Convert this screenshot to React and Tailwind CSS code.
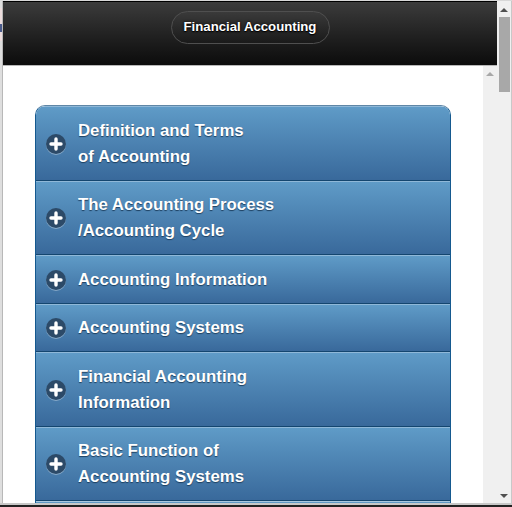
const items = [
  { lines: ["Definition and Terms", "of Accounting"], h: "h-[75px]" },
  { lines: ["The Accounting Process", "/Accounting Cycle"], h: "h-[74px]" },
  { lines: ["Accounting Information"], h: "h-[49px]" },
  { lines: ["Accounting Systems"], h: "h-[48px]" },
  { lines: ["Financial Accounting", "Information"], h: "h-[75px]" },
  { lines: ["Basic Function of", "Accounting Systems"], h: "h-[74px]" },
];

function Plus() {
  return (
    <span className="absolute left-[10px] top-1/2 -mt-[10px] flex h-[20px] w-[20px] items-center justify-center rounded-full bg-[#2c4a68] shadow-[0_1px_0_rgba(255,255,255,0.35)]">
      <svg width="14" height="14" viewBox="0 0 14 14">
        <path d="M7 2v10M2 7h10" stroke="#fff" strokeWidth="3.4" strokeLinecap="round" />
      </svg>
    </span>
  );
}

function Row({ it }) {
  return (
    <div
      className={`relative flex ${it.h} flex-col justify-center border-b border-[#14466f] border-t border-t-[#8fb8d8] bg-gradient-to-b from-[#5f9bc7] to-[#39699b] pl-[42px] text-[16.8px] leading-[26px] font-bold text-white [text-shadow:0_1px_1px_#1d3f5f]`}
    >
      <Plus />
      {it.lines.map((l) => (
        <div key={l}>{l}</div>
      ))}
    </div>
  );
}

export default function App() {
  return (
    <div className="flex h-[507px] w-[512px] flex-col overflow-hidden bg-[#d8d8d8] font-['Liberation_Sans',Arial,sans-serif]">
      <div className="flex min-h-0 flex-1 pt-px">
        <div className="flex w-[3px] shrink-0 flex-col border-r border-[#b8b8b8] bg-[#dedede]">
          <div className="mt-[7px] h-[33px] bg-[#ecdcdc] pt-[16px]">
            <div className="h-[8px] bg-[#4a5a8a]" />
          </div>
        </div>
        <div className="flex min-w-0 flex-1 flex-col bg-white">
          <header className="flex h-[65px] shrink-0 justify-center border-t border-b border-t-black border-b-[#b8b8b8] bg-gradient-to-b from-[#3c3c3c] to-[#0c0c0c] pt-[9px]">
            <div className="flex h-[33px] w-[159px] items-center justify-center rounded-full border border-[#4f4f4f] bg-gradient-to-b from-[#3a3a3a] to-[#1a1a1a] pb-px text-[13.2px] font-bold text-white [text-shadow:0_0_3px_#000,0_1px_1px_#000]">
              Financial Accounting
            </div>
          </header>
          <div className="flex min-h-0 flex-1">
            <div className="min-w-0 flex-1 overflow-hidden pt-[39px] pl-[32px]">
              <div className="w-[416px] overflow-hidden rounded-t-[10px] border-x border-t border-[#15598f] border-t-[#5f86a6]">
                {items.map((it) => (
                  <Row key={it.lines[0]} it={it} />
                ))}
                <div className="h-[10px] border-t border-[#a9c8df] bg-[#5e98c4]" />
              </div>
            </div>
            <div className="flex w-[14px] shrink-0 flex-col items-center bg-[#f0f0f0] pt-[6px]">
              <span className="h-0 w-0 border-x-[4px] border-b-[4px] border-x-transparent border-b-[#a8a8a8]" />
            </div>
          </div>
        </div>
        <aside className="relative flex w-[15px] shrink-0 flex-col items-center border-r border-[#c8c8c8] bg-[#f0f0f0]">
          <span className="mt-[7px] h-0 w-0 border-x-[4px] border-b-[4px] border-x-transparent border-b-[#505050]" />
          <div className="mt-[5px] h-[75px] w-[11px] bg-[#a8a8a8]" />
          <span className="mt-auto mb-[5px] h-0 w-0 border-x-[4px] border-t-[4px] border-x-transparent border-t-[#505050]" />
        </aside>
      </div>
      <div className="h-[2px] shrink-0 bg-[#c8c8c8]" />
      <div className="h-[2px] shrink-0 bg-[#222222]" />
    </div>
  );
}
